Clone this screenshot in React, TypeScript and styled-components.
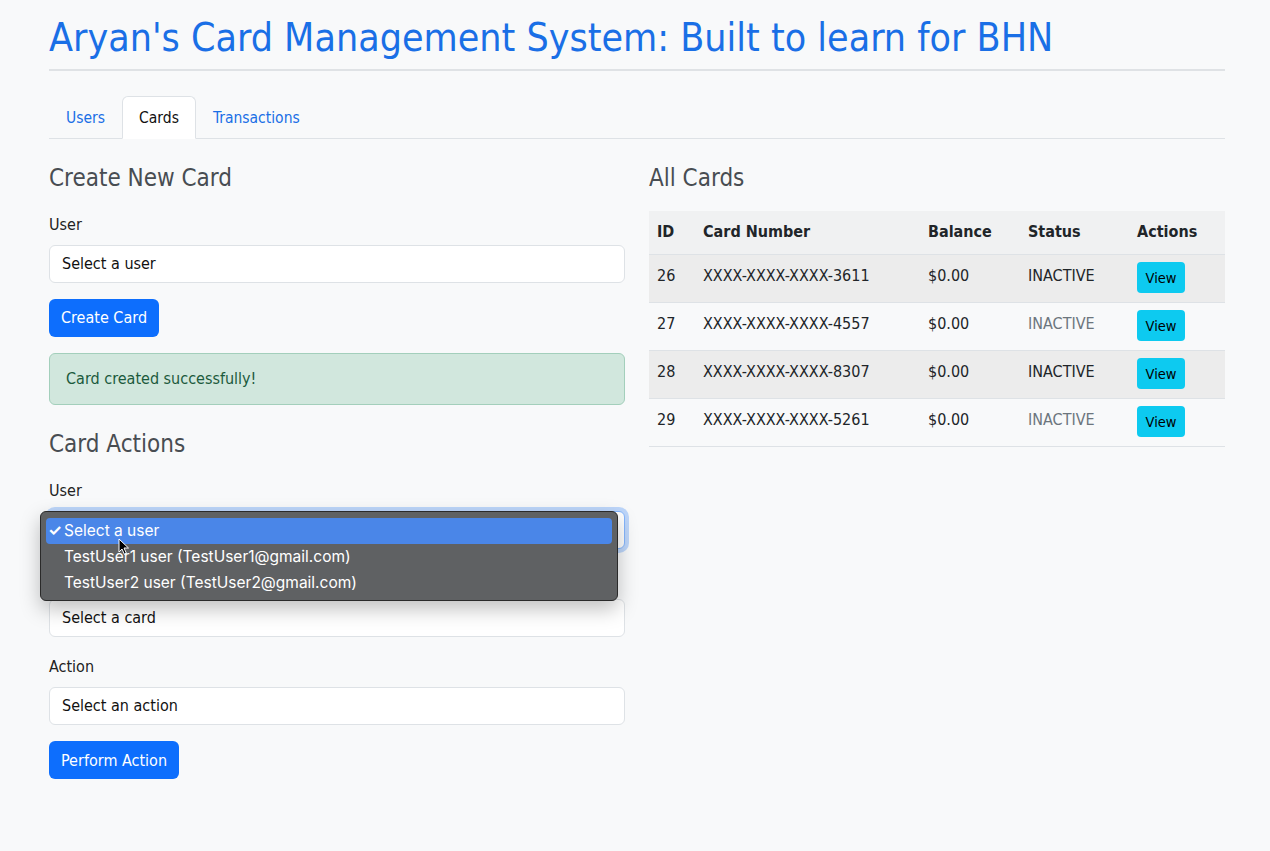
import React from "react";
import styled, { createGlobalStyle } from "styled-components";

const Global = createGlobalStyle`
  html, body { margin: 0; padding: 0; }
  body {
    background: #f8f9fa;
    color: #212529;
    font-family: "DejaVu Sans Condensed", "DejaVu Sans", sans-serif;
    font-size: 16px;
    line-height: 1.5;
  }
  * { box-sizing: border-box; }
`;

const Container = styled.div`
  width: 1176px;
  margin: 0 0 0 49px;
  padding-bottom: 40px;
`;

const Title = styled.h1`
  margin: 0;
  padding: 15px 0 7px;
  font-size: 39px;
  font-weight: 400;
  line-height: 1.2;
  color: #1a6fe6;
  border-bottom: 2px solid #dfe2e5;
`;

const Tabs = styled.ul`
  list-style: none;
  margin: 25px 0 0;
  padding: 0;
  display: flex;
  border-bottom: 1px solid #dee2e6;
`;

const Tab = styled.li<{ $active?: boolean }>`
  margin-bottom: -1px;
  padding: 8px 16px;
  height: 43px;
  line-height: 26px;
  font-size: 15.5px;
  border: 1px solid ${(p) => (p.$active ? "#dee2e6" : "transparent")};
  border-bottom-color: ${(p) => (p.$active ? "#fff" : "transparent")};
  border-radius: 6px 6px 0 0;
  background: ${(p) => (p.$active ? "#fff" : "transparent")};
  color: ${(p) => (p.$active ? "#111" : "#1a6fe6")};
`;

const Row = styled.div`
  display: grid;
  grid-template-columns: 576px 576px;
  gap: 24px;
  margin-top: 25px;
`;

const Col = styled.div`
  display: flex;
  flex-direction: column;
`;

const Heading = styled.h3<{ $mt?: number; $mb?: number }>`
  margin: ${(p) => p.$mt ?? 0}px 0 ${(p) => p.$mb ?? 2}px;
  font-size: 24px;
  font-weight: 400;
  line-height: 1.2;
  color: #484d52;
`;

const Label = styled.label`
  display: block;
  font-size: 16px;
  margin: 18px 0 8px;
  color: #222;
  line-height: 24px;
`;

const Field = styled.div`
  position: relative;
`;

const Select = styled.div<{ $focus?: boolean }>`
  height: 38px;
  background: #fff;
  border: 1px solid ${(p) => (p.$focus ? "#86b7fe" : "#dee2e6")};
  border-radius: 6px;
  padding: 0 12px;
  line-height: 36px;
  font-size: 16px;
  color: #111;
  box-shadow: ${(p) => (p.$focus ? "0 0 0 4px rgba(13,110,253,.25)" : "none")};
`;

const Button = styled.button`
  align-self: flex-start;
  margin-top: 16px;
  height: 38px;
  padding: 0 12px;
  border: none;
  border-radius: 6px;
  background: #0d6efd;
  color: #fff;
  font-family: inherit;
  font-size: 16px;
`;

const Alert = styled.div`
  margin-top: 16px;
  height: 52px;
  padding: 0 16px;
  line-height: 50px;
  border: 1px solid #a3cfbb;
  border-radius: 6px;
  background: #d1e7dd;
  font-size: 16px;
  color: #1b5a3c;
`;

const Table = styled.table`
  width: 100%;
  margin-top: 16px;
  border-collapse: collapse;
  font-size: 16px;
`;

const Th = styled.th<{ $w?: number }>`
  text-align: left;
  font-weight: 700;
  padding: 0 8px;
  height: 44px;
  width: ${(p) => (p.$w ? `${p.$w}px` : "auto")};
  background: #f0f1f2;
  color: #212529;
  border-bottom: 1px solid #dee2e6;
`;

const Tr = styled.tr<{ $striped?: boolean }>`
  background: ${(p) => (p.$striped ? "#ececec" : "transparent")};
  border-bottom: 1px solid #dee2e6;
`;

const Td = styled.td<{ $muted?: boolean }>`
  padding: 0 8px 5px;
  height: 48px;
  color: ${(p) => (p.$muted ? "#6c757d" : "#212529")};
`;

const ActionTd = styled.td`
  padding: 7px 8px 0;
  height: 48px;
  vertical-align: top;
`;

const ViewButton = styled.button`
  width: 48px;
  height: 31px;
  padding: 0;
  border: none;
  border-radius: 4px;
  background: #0dcaf0;
  color: #000;
  font-family: inherit;
  font-size: 14.5px;
`;

const Popup = styled.div`
  position: absolute;
  left: -9px;
  top: 0;
  width: 578px;
  height: 90px;
  padding: 6px 5px;
  background: #5f6163;
  border: 1px solid #2a2a2a;
  border-radius: 6px;
  box-shadow: 0 8px 20px rgba(0, 0, 0, 0.25);
  font-family: "Inter", "Liberation Sans", sans-serif;
  font-size: 15.5px;
  color: #f2f2f2;
  z-index: 2;
`;

const Option = styled.div<{ $selected?: boolean }>`
  position: relative;
  height: 26px;
  line-height: 25px;
  padding-left: 18px;
  border-radius: 4px;
  background: ${(p) => (p.$selected ? "#4a86e8" : "transparent")};
  color: #fff;
`;

const Check = styled.span`
  position: absolute;
  left: 2px;
  top: 0;
  font-weight: 700;
`;

const Cursor = styled.svg`
  position: absolute;
  left: 72px;
  top: 20px;
`;

const cards = [
  { id: 26, num: "XXXX-XXXX-XXXX-3611" },
  { id: 27, num: "XXXX-XXXX-XXXX-4557" },
  { id: 28, num: "XXXX-XXXX-XXXX-8307" },
  { id: 29, num: "XXXX-XXXX-XXXX-5261" },
];

export default function App() {
  return (
    <>
      <Global />
      <Container>
        <Title>Aryan's Card Management System: Built to learn for BHN</Title>
        <Tabs>
          <Tab>Users</Tab>
          <Tab $active>Cards</Tab>
          <Tab>Transactions</Tab>
        </Tabs>
        <Row>
          <Col>
            <Heading>Create New Card</Heading>
            <Label>User</Label>
            <Select>Select a user</Select>
            <Button>Create Card</Button>
            <Alert>Card created successfully!</Alert>
            <Heading $mt={25} $mb={3}>Card Actions</Heading>
            <Label>User</Label>
            <Field>
              <Select $focus>Select a user</Select>
              <Popup>
                <Option $selected>
                  <Check>✓</Check>Select a user
                  <Cursor width="12" height="18" viewBox="0 0 12 18">
                    <path
                      d="M1 1 L1 14 L4 11 L6.5 16.5 L8.5 15.5 L6 10 L10.5 10 Z"
                      fill="#000"
                      stroke="#fff"
                      strokeWidth="1"
                    />
                  </Cursor>
                </Option>
                <Option>TestUser1 user (TestUser1@gmail.com)</Option>
                <Option>TestUser2 user (TestUser2@gmail.com)</Option>
              </Popup>
            </Field>
            <Label>Card</Label>
            <Select>Select a card</Select>
            <Label>Action</Label>
            <Select>Select an action</Select>
            <Button>Perform Action</Button>
          </Col>
          <Col>
            <Heading>All Cards</Heading>
            <Table>
              <thead>
                <tr>
                  <Th $w={46}>ID</Th>
                  <Th $w={225}>Card Number</Th>
                  <Th $w={100}>Balance</Th>
                  <Th $w={109}>Status</Th>
                  <Th>Actions</Th>
                </tr>
              </thead>
              <tbody>
                {cards.map((c, i) => (
                  <Tr key={c.id} $striped={i % 2 === 0}>
                    <Td>{c.id}</Td>
                    <Td>{c.num}</Td>
                    <Td>$0.00</Td>
                    <Td $muted={i % 2 === 1}>INACTIVE</Td>
                    <ActionTd>
                      <ViewButton>View</ViewButton>
                    </ActionTd>
                  </Tr>
                ))}
              </tbody>
            </Table>
          </Col>
        </Row>
      </Container>
    </>
  );
}
